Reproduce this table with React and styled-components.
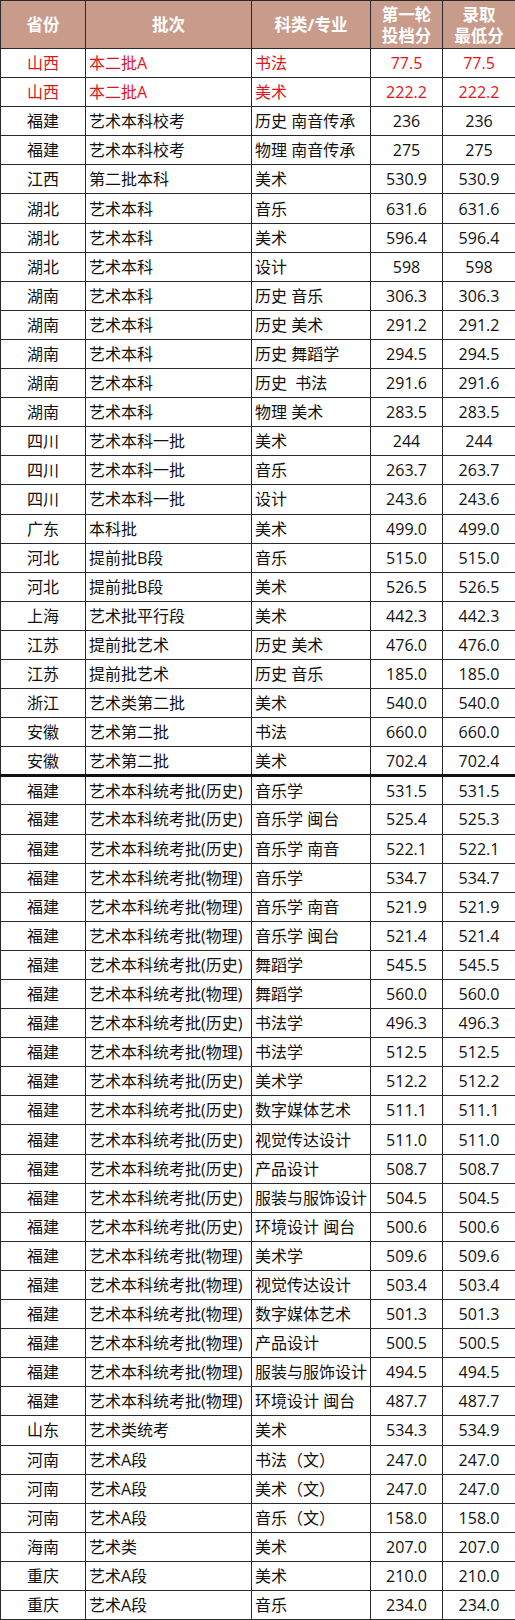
import React from "react";
import styled, { createGlobalStyle } from "styled-components";

const GlobalStyle = createGlobalStyle`
  html, body {
    margin: 0;
    padding: 0;
    background: #ffffff;
  }
  body {
    font-family: "Open Sans", "Noto Sans CJK SC", sans-serif;
  }
`;

const Table = styled.table`
  width: 515px;
  table-layout: fixed;
  border-collapse: collapse;
  font-size: 16px;
  color: #111;
`;

const HeadCell = styled.th`
  height: 47px;
  padding: 0;
  background: #c99b8b;
  color: #fff;
  font-weight: bold;
  font-size: 16.5px;
  line-height: 21px;
  text-align: center;
  border: 1px solid #2a2a2a;
`;

const Row = styled.tr`
  height: 29.1px;
  border-top: ${(p) => (p.$thick ? "3px solid #111" : "1px solid #2a2a2a")};
`;

const Cell = styled.td`
  padding: 0 0 0 ${(p) => (p.$left ? "3px" : "0")};
  text-align: ${(p) => (p.$left ? "left" : "center")};
  border-left: 1px solid #2a2a2a;
  border-right: 1px solid #2a2a2a;
  border-bottom: 1px solid #2a2a2a;
  color: ${(p) => (p.$red ? "#e3141b" : "#111")};
  white-space: nowrap;
  overflow: hidden;
  line-height: 20px;
`;

const rows = [
  ["山西", "本二批A", "书法", "77.5", "77.5", true],
  ["山西", "本二批A", "美术", "222.2", "222.2", true],
  ["福建", "艺术本科校考", "历史 南音传承", "236", "236"],
  ["福建", "艺术本科校考", "物理 南音传承", "275", "275"],
  ["江西", "第二批本科", "美术", "530.9", "530.9"],
  ["湖北", "艺术本科", "音乐", "631.6", "631.6"],
  ["湖北", "艺术本科", "美术", "596.4", "596.4"],
  ["湖北", "艺术本科", "设计", "598", "598"],
  ["湖南", "艺术本科", "历史 音乐", "306.3", "306.3"],
  ["湖南", "艺术本科", "历史 美术", "291.2", "291.2"],
  ["湖南", "艺术本科", "历史 舞蹈学", "294.5", "294.5"],
  ["湖南", "艺术本科", "历史\u00a0\u00a0书法", "291.6", "291.6"],
  ["湖南", "艺术本科", "物理 美术", "283.5", "283.5"],
  ["四川", "艺术本科一批", "美术", "244", "244"],
  ["四川", "艺术本科一批", "音乐", "263.7", "263.7"],
  ["四川", "艺术本科一批", "设计", "243.6", "243.6"],
  ["广东", "本科批", "美术", "499.0", "499.0"],
  ["河北", "提前批B段", "音乐", "515.0", "515.0"],
  ["河北", "提前批B段", "美术", "526.5", "526.5"],
  ["上海", "艺术批平行段", "美术", "442.3", "442.3"],
  ["江苏", "提前批艺术", "历史 美术", "476.0", "476.0"],
  ["江苏", "提前批艺术", "历史 音乐", "185.0", "185.0"],
  ["浙江", "艺术类第二批", "美术", "540.0", "540.0"],
  ["安徽", "艺术第二批", "书法", "660.0", "660.0"],
  ["安徽", "艺术第二批", "美术", "702.4", "702.4"],
  ["福建", "艺术本科统考批(历史)", "音乐学", "531.5", "531.5"],
  ["福建", "艺术本科统考批(历史)", "音乐学 闽台", "525.4", "525.3"],
  ["福建", "艺术本科统考批(历史)", "音乐学 南音", "522.1", "522.1"],
  ["福建", "艺术本科统考批(物理)", "音乐学", "534.7", "534.7"],
  ["福建", "艺术本科统考批(物理)", "音乐学 南音", "521.9", "521.9"],
  ["福建", "艺术本科统考批(物理)", "音乐学 闽台", "521.4", "521.4"],
  ["福建", "艺术本科统考批(历史)", "舞蹈学", "545.5", "545.5"],
  ["福建", "艺术本科统考批(物理)", "舞蹈学", "560.0", "560.0"],
  ["福建", "艺术本科统考批(历史)", "书法学", "496.3", "496.3"],
  ["福建", "艺术本科统考批(物理)", "书法学", "512.5", "512.5"],
  ["福建", "艺术本科统考批(历史)", "美术学", "512.2", "512.2"],
  ["福建", "艺术本科统考批(历史)", "数字媒体艺术", "511.1", "511.1"],
  ["福建", "艺术本科统考批(历史)", "视觉传达设计", "511.0", "511.0"],
  ["福建", "艺术本科统考批(历史)", "产品设计", "508.7", "508.7"],
  ["福建", "艺术本科统考批(历史)", "服装与服饰设计", "504.5", "504.5"],
  ["福建", "艺术本科统考批(历史)", "环境设计 闽台", "500.6", "500.6"],
  ["福建", "艺术本科统考批(物理)", "美术学", "509.6", "509.6"],
  ["福建", "艺术本科统考批(物理)", "视觉传达设计", "503.4", "503.4"],
  ["福建", "艺术本科统考批(物理)", "数字媒体艺术", "501.3", "501.3"],
  ["福建", "艺术本科统考批(物理)", "产品设计", "500.5", "500.5"],
  ["福建", "艺术本科统考批(物理)", "服装与服饰设计", "494.5", "494.5"],
  ["福建", "艺术本科统考批(物理)", "环境设计 闽台", "487.7", "487.7"],
  ["山东", "艺术类统考", "美术", "534.3", "534.9"],
  ["河南", "艺术A段", "书法（文）", "247.0", "247.0"],
  ["河南", "艺术A段", "美术（文）", "247.0", "247.0"],
  ["河南", "艺术A段", "音乐（文）", "158.0", "158.0"],
  ["海南", "艺术类", "美术", "207.0", "207.0"],
  ["重庆", "艺术A段", "美术", "210.0", "210.0"],
  ["重庆", "艺术A段", "音乐", "234.0", "234.0"],
];

function App() {
  return (
    <>
      <GlobalStyle />
      <Table>
        <colgroup>
          <col style={{ width: 85 }} />
          <col style={{ width: 166 }} />
          <col style={{ width: 119 }} />
          <col style={{ width: 72 }} />
          <col style={{ width: 73 }} />
        </colgroup>
        <thead>
          <tr>
            <HeadCell>省份</HeadCell>
            <HeadCell>批次</HeadCell>
            <HeadCell>科类/专业</HeadCell>
            <HeadCell>
              第一轮
              <br />
              投档分
            </HeadCell>
            <HeadCell>
              录取
              <br />
              最低分
            </HeadCell>
          </tr>
        </thead>
        <tbody>
          {rows.map((r, i) => (
            <Row key={i} $thick={i === 25}>
              <Cell $red={r[5]}>{r[0]}</Cell>
              <Cell $left $red={r[5]}>{r[1]}</Cell>
              <Cell $left $red={r[5]}>{r[2]}</Cell>
              <Cell $red={r[5]}>{r[3]}</Cell>
              <Cell $red={r[5]}>{r[4]}</Cell>
            </Row>
          ))}
        </tbody>
      </Table>
    </>
  );
}

export default App;
